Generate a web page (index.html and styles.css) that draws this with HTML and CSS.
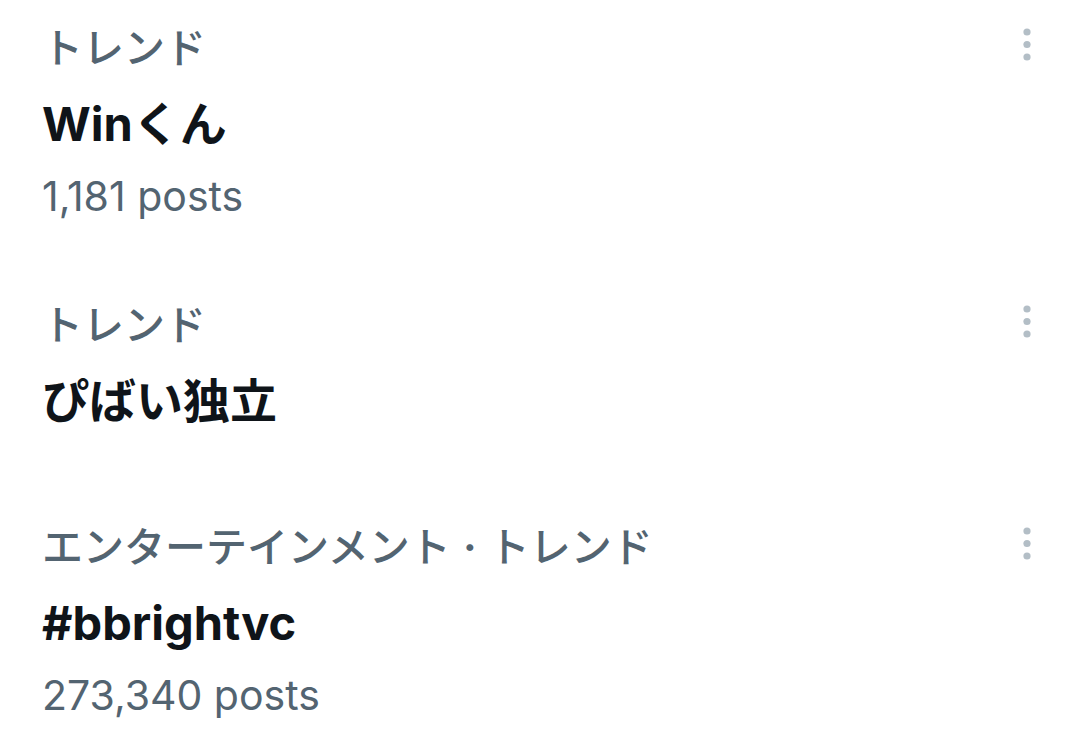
FILE: index.html
```html
<!DOCTYPE html>
<html>
<head>
    <meta charset="utf-8">
    <title>トレンド</title>
    <link rel="stylesheet" href="styles.css">
</head>
<body>
    <div class="trend-list">
        <div class="trend">
            <div class="trend-body">
                <div class="trend-category">トレンド</div>
                <div class="trend-title">Winくん</div>
                <div class="trend-count">1,181 posts</div>
            </div>
            <button class="more" type="button" aria-label="More">
                <svg viewBox="0 0 10 34" width="10" height="34"><circle cx="5" cy="4" r="3.6"/><circle cx="5" cy="16.5" r="3.6"/><circle cx="5" cy="29" r="3.6"/></svg>
            </button>
        </div>

        <div class="trend no-count">
            <div class="trend-body">
                <div class="trend-category">トレンド</div>
                <div class="trend-title">ぴばい独立</div>
            </div>
            <button class="more" type="button" aria-label="More">
                <svg viewBox="0 0 10 34" width="10" height="34"><circle cx="5" cy="4" r="3.6"/><circle cx="5" cy="16.5" r="3.6"/><circle cx="5" cy="29" r="3.6"/></svg>
            </button>
        </div>

        <div class="trend">
            <div class="trend-body">
                <div class="trend-category">エンターテインメント<span class="sep">·</span>トレンド</div>
                <div class="trend-title">#bbrightvc</div>
                <div class="trend-count">273,340 posts</div>
            </div>
            <button class="more" type="button" aria-label="More">
                <svg viewBox="0 0 10 34" width="10" height="34"><circle cx="5" cy="4" r="3.6"/><circle cx="5" cy="16.5" r="3.6"/><circle cx="5" cy="29" r="3.6"/></svg>
            </button>
        </div>
    </div>
</body>
</html>
```

FILE: styles.css
```css
body {
    margin: 0;
    background: #fff;
    font-family: Inter, "Noto Sans CJK JP", sans-serif;
}

.trend-list {
    padding-top: 13px;
}

.trend {
    display: flex;
    align-items: flex-start;
    padding: 0 44px 63px 42px;
}

.trend.no-count {
    padding-bottom: 70px;
}

.trend:last-child {
    padding-bottom: 0;
}

.trend-body {
    flex: 1;
}

.trend-category {
    font-size: 41px;
    line-height: 70px;
    font-weight: 500;
    color: #536471;
}

.trend-category .sep {
    display: inline-block;
    width: 38px;
    text-align: center;
    font-weight: 700;
}

.trend-title {
    font-size: 47px;
    line-height: 82px;
    font-weight: 700;
    color: #0f1419;
}

.trend-count {
    font-size: 41px;
    line-height: 62px;
    color: #536471;
}

.more {
    border: 0;
    background: none;
    padding: 0;
    margin: 15px 4px 0 0;
    fill: #b3bec6;
}

.more svg {
    display: block;
}
```
